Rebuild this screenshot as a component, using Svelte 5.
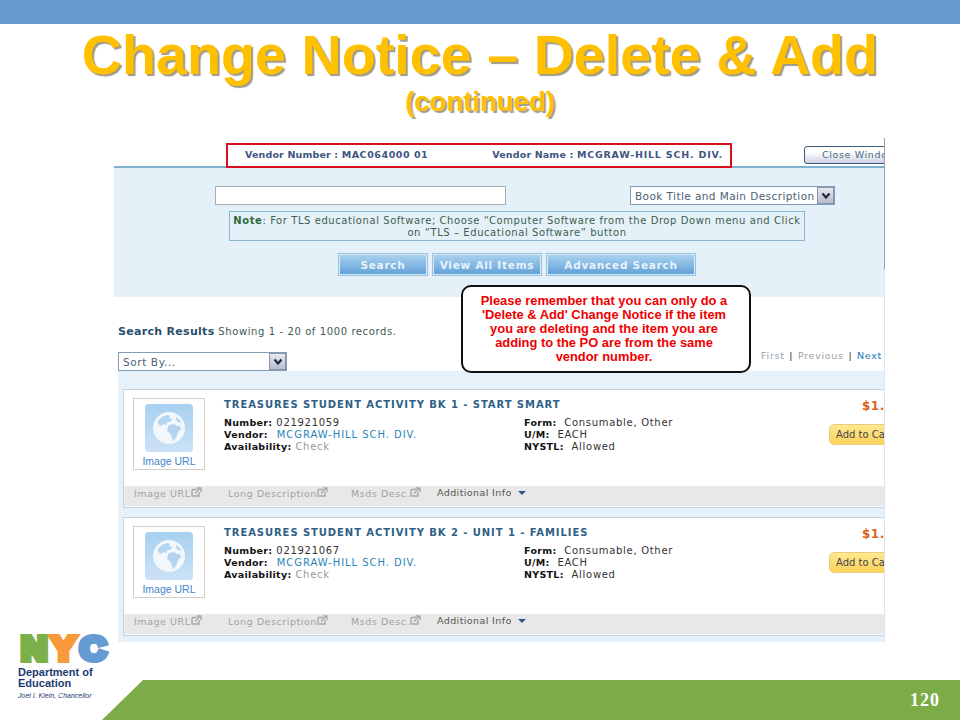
<script lang="ts">
  const items = [
    { title: 'TREASURES STUDENT ACTIVITY BK 1 - START SMART', number: '021921059' },
    { title: 'TREASURES STUDENT ACTIVITY BK 2 - UNIT 1 - FAMILIES', number: '021921067' },
  ]
  const links = ['Image URL', 'Long Description', 'Msds Desc.']
</script>

<div class="slide">
  <div class="topbar"></div>

  <header class="heading">
    <h1>Change Notice – Delete &amp; Add</h1>
    <h2>(continued)</h2>
  </header>

  <div class="lower">
    <aside class="gutter">
      <div class="logo">
        <div class="logo__nyc"><span class="n">N</span><span class="y">Y</span><span class="c">C</span></div>
        <div class="logo__dept">Department of<br />Education</div>
        <div class="logo__name">Joel I. Klein, Chancellor</div>
      </div>
    </aside>

    <div class="right">
      <main class="screen">
        <div class="vendor-row">
          <div class="vendor-box">
            <span>Vendor Number : <b>MAC064000 01</b></span>
            <span>Vendor Name : <b>MCGRAW-HILL SCH. DIV.</b></span>
          </div>
          <div class="close-btn">Close Window</div>
        </div>

        <section class="search">
          <div class="search__fields">
            <div class="input"></div>
            <div class="select select--title">
              <span>Book Title and Main Description</span>
              <span class="select__arrow">
                <svg width="10" height="8" viewBox="0 0 10 8"><path d="M1.5 1.5 5 5.5l3.5-4" fill="none" stroke="#1f2a40" stroke-width="2.2" /></svg>
              </span>
            </div>
          </div>
          <div class="note">
            <b>Note</b>: For TLS educational Software; Choose “Computer Software from the Drop Down menu and Click<br />on “TLS – Educational Software” button
          </div>
          <div class="search__buttons">
            <div class="blue-btn blue-btn--search">Search</div>
            <div class="blue-btn blue-btn--all">View All Items</div>
            <div class="blue-btn blue-btn--adv">Advanced Search</div>
          </div>
        </section>

        <section class="results-head">
          <div class="results-head__title"><b>Search Results</b> Showing 1 - 20 of 1000 records.</div>
          <div class="results-head__row">
            <div class="select select--sort">
              <span>Sort By...</span>
              <span class="select__arrow">
                <svg width="10" height="8" viewBox="0 0 10 8"><path d="M1.5 1.5 5 5.5l3.5-4" fill="none" stroke="#1f2a40" stroke-width="2.2" /></svg>
              </span>
            </div>
            <div class="pager">First <i>|</i> Previous <i>|</i> <em>Next</em></div>
          </div>
        </section>

        <section class="list">
          {#each items as item}
            <article class="card">
              <div class="card__body">
                <div class="thumb">
                  <div class="thumb__tile">
                    <svg width="34" height="34" viewBox="0 0 34 34">
                      <circle cx="17" cy="17" r="16" fill="#f2f7fc" />
                      <path d="M6 10c2-3 5-5 9-6l3 1-1 2 3 1-2 3-3 0-1 3-3-1-2 2-3-2z" fill="#b4d4f0" />
                      <path d="M17 14l5-1 3 2 3 0 1 3-3 3-1 4-3 4-1 2-1-5-2-4-3-2 1-4z" fill="#b4d4f0" />
                      <path d="M24 6l4 3 1 3-3-1-2-2z" fill="#b4d4f0" />
                    </svg>
                  </div>
                  <div class="thumb__label">Image URL</div>
                </div>
                <div class="info">
                  <div class="info__title">{item.title}</div>
                  <div class="info__cols">
                    <div class="info__col">
                      <div><b>Number:</b> {item.number}</div>
                      <div><b>Vendor:</b>&nbsp; <span class="link">MCGRAW-HILL SCH. DIV.</span></div>
                      <div><b>Availability:</b> <span class="muted">Check</span></div>
                    </div>
                    <div class="info__col">
                      <div><b>Form:</b>&nbsp; Consumable, Other</div>
                      <div><b>U/M:</b>&nbsp; EACH</div>
                      <div><b>NYSTL:</b>&nbsp; Allowed</div>
                    </div>
                  </div>
                </div>
                <div class="buy">
                  <div class="buy__price">$1.</div>
                  <div class="buy__btn">Add to Cart</div>
                </div>
              </div>
              <div class="card__foot">
                {#each links as link}
                  <span class="foot-link">
                    {link}<svg width="11" height="10" viewBox="0 0 11 10"><path d="M1 2.5h5M1 2.5v6.5h7V5" fill="none" stroke="#a8a8a8" stroke-width="1.4" /><path d="M4 6.5 9 1.5M5.8 1h4.2v4" fill="none" stroke="#a8a8a8" stroke-width="1.4" /></svg>
                  </span>
                {/each}
                <span class="foot-more">Additional Info <i class="caret"></i></span>
              </div>
            </article>
          {/each}
        </section>

        <div class="callout">
          Please remember that you can only do a<br />'Delete &amp; Add' Change Notice if the item<br />you are deleting and the item you are<br />adding to the PO are from the same<br />vendor number.
        </div>
      </main>

      <footer class="footer"><span>120</span></footer>
    </div>
  </div>
</div>

<style>
  :global(body) {
    margin: 0;
    background: #fff;
  }

  .slide {
    width: 960px;
    height: 720px;
    display: flex;
    flex-direction: column;
    overflow: hidden;
    background: #fff;
    font-family: "DejaVu Sans", sans-serif;
  }

  .topbar {
    height: 24px;
    flex: none;
    background: #6699cc;
  }

  /* Title */
  .heading {
    height: 114px;
    flex: none;
    text-align: center;
    font-family: "Liberation Sans", sans-serif;
    color: #ffc000;
    text-shadow: 2px 2px 1px #a09a88;
  }

  .heading h1 {
    margin: 0;
    padding-top: 1px;
    font-size: 55.7px;
    line-height: 60px;
    font-weight: 700;
  }

  .heading h2 {
    margin: 0;
    font-size: 27.5px;
    line-height: 34px;
    font-weight: 700;
  }

  .lower {
    flex: 1;
    display: flex;
    min-height: 0;
  }

  /* Logo */
  .gutter {
    width: 102px;
    flex: none;
    display: flex;
    flex-direction: column;
    justify-content: flex-end;
    padding: 0 0 20px 18px;
    box-sizing: border-box;
  }

  .logo {
    font-family: "Liberation Sans", sans-serif;
    color: #1b3a70;
    white-space: nowrap;
  }

  .logo__nyc {
    height: 30px;
    font-size: 33px;
    line-height: 30px;
    font-weight: 700;
    letter-spacing: 4px;
    padding-left: 3px;
    margin-bottom: 3px;
    -webkit-text-stroke: 6px;
    transform: scaleX(1.09);
    transform-origin: left center;
  }

  .n { color: #7cb04b; }
  .y { color: #f8993a; }
  .c { color: #659ad2; }

  .logo__dept {
    font-size: 11px;
    line-height: 11px;
    font-weight: 700;
  }

  .logo__name {
    margin-top: 2px;
    font-size: 7px;
    line-height: 9px;
    font-style: italic;
  }

  .right {
    flex: 1;
    min-width: 0;
    display: flex;
    flex-direction: column;
  }

  /* Embedded screen */
  .screen {
    position: relative;
    width: 771px;
    height: 504px;
    margin-left: 12px;
    flex: none;
    overflow: hidden;
    box-sizing: border-box;
    border-right: 1px solid #cfd3da;
    border-image: linear-gradient(#9a9fa8 26%, #dfe4ee 26%) 1;
  }

  .vendor-row {
    height: 30px;
    display: flex;
    align-items: flex-start;
    box-sizing: border-box;
    padding: 5px 0 0 112px;
    border-bottom: 2px solid #7fb0d0;
  }

  .vendor-box {
    width: 506px;
    height: 25px;
    flex: none;
    box-sizing: border-box;
    border: 2px solid #d9101c;
    display: flex;
    padding: 4px 0 0 17px;
    gap: 64px;
    font-size: 9.5px;
    font-weight: 700;
    color: #3e5580;
    background: #fff;
    white-space: nowrap;
    letter-spacing: 0.15px;
  }

  .vendor-box b {
    letter-spacing: 0.55px;
  }

  .vendor-box span:last-child b {
    letter-spacing: 0.8px;
  }

  .close-btn {
    width: 110px;
    height: 18px;
    flex: none;
    margin: 3px 0 0 72px;
    box-sizing: border-box;
    border: 1px solid #3a5a80;
    border-radius: 3px;
    background: linear-gradient(#fff 30%, #cfd2e4);
    font-size: 9.5px;
    line-height: 16px;
    letter-spacing: 0.65px;
    color: #4a6a80;
    text-align: center;
    white-space: nowrap;
  }

  /* Search panel */
  .search {
    height: 129px;
    box-sizing: border-box;
    padding-top: 18px;
    background: #e4f1f9;
  }

  .search__fields {
    display: flex;
    gap: 124px;
    padding-left: 101px;
  }

  .input {
    width: 291px;
    height: 19px;
    box-sizing: border-box;
    border: 1px solid #a5acb2;
    background: #fff;
  }

  .select {
    height: 19px;
    box-sizing: border-box;
    display: flex;
    align-items: center;
    justify-content: space-between;
    border: 1px solid #7f9db9;
    background: #fff;
    color: #4a6278;
    font-size: 10.5px;
    padding-left: 4px;
    white-space: nowrap;
  }

  .select--title {
    width: 205px;
    letter-spacing: 0.42px;
  }

  .select--sort {
    width: 169px;
    letter-spacing: 0.6px;
  }

  .select__arrow {
    width: 17px;
    height: 17px;
    flex: none;
    display: flex;
    align-items: center;
    justify-content: center;
    box-sizing: border-box;
    border: 1px solid #8f93a8;
    background: linear-gradient(#e6e8f0, #b8bccb);
  }

  .note {
    width: 576px;
    height: 30px;
    box-sizing: border-box;
    margin: 6px 0 0 115px;
    padding-top: 3px;
    border: 1px solid #87b6cf;
    font-size: 10px;
    line-height: 12px;
    letter-spacing: 0.57px;
    text-align: center;
    color: #3f5e4c;
    white-space: nowrap;
  }

  .note b {
    color: #2f6a3a;
  }

  .search__buttons {
    display: flex;
    gap: 4px;
    margin-top: 12px;
    padding-left: 224px;
  }

  .blue-btn {
    height: 23px;
    box-sizing: border-box;
    border: 1px solid #9cc3de;
    outline: 1px solid #d6e8f4;
    outline-offset: -2px;
    background: linear-gradient(#aed4ef, #5f9fd8);
    color: #e8f3fb;
    font-size: 10.5px;
    font-weight: 700;
    line-height: 22px;
    letter-spacing: 0.75px;
    text-align: center;
    white-space: nowrap;
  }

  .blue-btn--search { width: 90px; }
  .blue-btn--all { width: 110px; }
  .blue-btn--adv { width: 150px; }

  /* Results header */
  .results-head {
    height: 74px;
    box-sizing: border-box;
    padding: 28px 0 0 4px;
  }

  .results-head__title {
    height: 27px;
    font-size: 10px;
    line-height: 14px;
    letter-spacing: 0.6px;
    color: #3c5a50;
    white-space: nowrap;
  }

  .results-head__title b {
    font-size: 11px;
    color: #28506e;
    letter-spacing: 0.3px;
  }

  .results-head__row {
    display: flex;
    justify-content: space-between;
    align-items: center;
    height: 19px;
  }

  .pager {
    padding-right: 2px;
    margin-top: -12px;
    font-size: 9.5px;
    letter-spacing: 0.7px;
    color: #9aa0a4;
    white-space: nowrap;
  }

  .pager i {
    font-style: normal;
    color: #333;
    padding: 0 1px;
  }

  .pager em {
    font-style: normal;
    color: #2377b0;
  }

  /* Result list */
  .list {
    height: 271px;
    margin-left: 4px;
    box-sizing: border-box;
    padding: 18px 0 0 5px;
    background: #e6f1fa;
    display: flex;
    flex-direction: column;
    gap: 9px;
  }

  .card {
    height: 119px;
    flex: none;
    box-sizing: border-box;
    border-top: 1px solid #c6d2de;
    border-left: 1px solid #c6d2de;
    border-bottom: 1px solid #c6d2de;
    background: #fff;
    overflow: hidden;
  }

  .card__body {
    height: 96px;
    display: flex;
    padding: 8px 0 0 9px;
    box-sizing: border-box;
  }

  .thumb {
    width: 72px;
    height: 72px;
    flex: none;
    box-sizing: border-box;
    border: 1px solid #cfcfcf;
    display: flex;
    flex-direction: column;
    align-items: center;
    padding-top: 5px;
  }

  .thumb__tile {
    width: 48px;
    height: 48px;
    border-radius: 4px;
    background: linear-gradient(#a8d0f0, #cbe2f6);
    display: flex;
    align-items: center;
    justify-content: center;
  }

  .thumb__label {
    margin-top: 3px;
    font-family: "Liberation Sans", sans-serif;
    font-size: 10.5px;
    line-height: 12px;
    color: #3f86c8;
  }

  .info {
    width: 605px;
    flex: none;
    margin-left: 19px;
    font-size: 10px;
    line-height: 12px;
    letter-spacing: 0.7px;
    color: #333;
    white-space: nowrap;
  }

  .info__title {
    height: 19px;
    font-size: 10px;
    line-height: 14px;
    font-weight: 700;
    letter-spacing: 0.93px;
    color: #2f5f86;
  }

  .info__cols {
    display: grid;
    grid-template-columns: 300px 1fr;
  }

  .info__col b {
    font-size: 9.5px;
    color: #111;
    letter-spacing: 0.3px;
  }

  .link {
    margin-left: 1px;
    letter-spacing: 0.95px;
    color: #2b86b8;
  }

  .muted { color: #9a9a9a; }

  .buy {
    width: 80px;
    flex: none;
    white-space: nowrap;
  }

  .buy__price {
    margin: 0 0 0 33px;
    font-size: 12px;
    line-height: 16px;
    font-weight: 700;
    letter-spacing: 0.5px;
    color: #e05e1c;
  }

  .buy__btn {
    width: 72px;
    height: 21px;
    margin-top: 10px;
    box-sizing: border-box;
    border: 1px solid #e8cd7c;
    border-radius: 5px;
    background: linear-gradient(#ffe890, #fbd25a);
    font-size: 10px;
    line-height: 19px;
    padding-left: 6px;
    color: #444;
  }

  .card__foot {
    height: 20px;
    position: relative;
    display: grid;
    grid-template-columns: 94px 123px 86px 1fr;
    align-items: center;
    padding: 0 0 6px 10px;
    box-sizing: border-box;
    background: #e8e8e8;
    font-size: 9.5px;
    letter-spacing: 0.55px;
    white-space: nowrap;
  }

  .foot-link {
    color: #a2a2a2;
    display: flex;
    align-items: flex-start;
  }

  .foot-link svg {
    margin-top: -1px;
  }

  .foot-more {
    color: #555;
    margin-top: -1px;
    letter-spacing: 0.4px;
  }

  .caret {
    display: inline-block;
    width: 0;
    height: 0;
    margin-left: 3px;
    vertical-align: 1px;
    border-left: 4px solid transparent;
    border-right: 4px solid transparent;
    border-top: 4px solid #2e5a88;
  }

  /* Overlay note */
  .callout {
    position: absolute;
    left: 347px;
    top: 147px;
    width: 290px;
    height: 88px;
    box-sizing: border-box;
    padding: 7px 4px 0 0;
    border: 2px solid #111;
    border-radius: 10px;
    background: #fff;
    font-family: "Liberation Sans", sans-serif;
    font-size: 12.9px;
    line-height: 14px;
    font-weight: 700;
    text-align: center;
    color: #ee0000;
    white-space: nowrap;
  }

  /* Footer */
  .footer {
    margin-top: auto;
    height: 40px;
    flex: none;
    display: flex;
    align-items: center;
    justify-content: flex-end;
    padding-right: 20px;
    background: #7cac48;
    clip-path: polygon(41px 0, 100% 0, 100% 100%, 0 100%);
    font-family: "Liberation Serif", serif;
    font-size: 18px;
    letter-spacing: 1px;
    font-weight: 700;
    color: #fff;
  }
</style>
